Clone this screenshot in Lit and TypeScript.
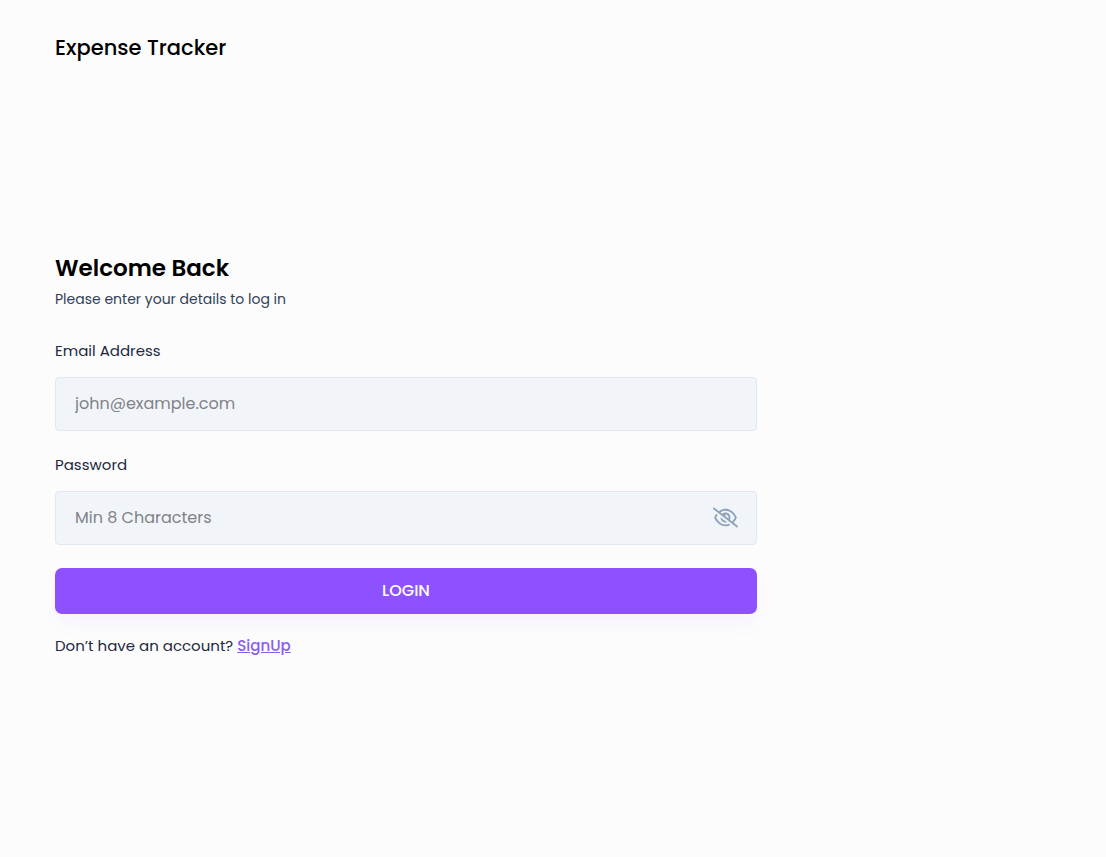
import { LitElement, html, css } from "lit";
import { customElement, state } from "lit/decorators.js";

@customElement("app-root")
export class AppRoot extends LitElement {
  @state() private showPassword = false;

  static styles = css`
    :host {
      display: block;
      font-family: Poppins, Inter, "Liberation Sans", sans-serif;
      font-size: 15px;
      line-height: 22px;
      color: #1d293d;
      background: #fcfcfc;
    }
    * {
      box-sizing: border-box;
    }
    .page {
      display: grid;
      grid-template-columns: 58fr 21fr;
      min-height: 100vh;
    }
    .panel {
      display: flex;
      flex-direction: column;
      padding: 32px 55px 13px;
    }
    .brand {
      margin: 0;
      font-size: 21px;
      font-weight: 500;
      line-height: 32px;
      color: #000;
    }
    .content {
      flex: 1;
      display: flex;
      flex-direction: column;
      justify-content: center;
    }
    .title {
      margin: 0;
      font-size: 23px;
      font-weight: 600;
      line-height: 32px;
      color: #000;
    }
    .subtitle {
      margin: 5px 0 31px;
      font-size: 14px;
      line-height: 20px;
      color: #314158;
    }
    .form {
      display: flex;
      flex-direction: column;
      gap: 23px;
    }
    .field {
      display: flex;
      flex-direction: column;
      gap: 15px;
    }
    .box {
      display: flex;
      align-items: center;
      height: 54px;
      padding: 0 18px 0 19px;
      border: 1px solid #e2e8f0;
      border-radius: 4px;
      background: #f1f5f9;
    }
    .input {
      flex: 1;
      min-width: 0;
      padding: 0;
      border: 0;
      outline: 0;
      background: transparent;
      font: inherit;
      font-size: 16px;
      line-height: 24px;
      color: inherit;
    }
    .input::placeholder {
      color: #808288;
      opacity: 1;
    }
    .toggle {
      display: flex;
      padding: 0;
      border: 0;
      background: none;
      color: #90a1b9;
      cursor: pointer;
    }
    .submit {
      height: 46px;
      border: 0;
      border-radius: 7px;
      background: #8e51ff;
      box-shadow: 0 10px 18px #ad46ff0d;
      color: #fff;
      font: inherit;
      font-size: 16px;
      font-weight: 500;
      cursor: pointer;
    }
    .signup {
      margin: 21px 0 0;
    }
    .link {
      font-weight: 500;
      color: #875cf5;
      text-decoration: underline;
    }
  `;

  render() {
    return html`
      <div class="page">
        <div class="panel">
          <h2 class="brand">Expense Tracker</h2>
          <main class="content">
            <h3 class="title">Welcome Back</h3>
            <p class="subtitle">Please enter your details to log in</p>
            <form class="form" @submit=${(e: Event) => e.preventDefault()}>
              <div class="field">
                <label for="email">Email Address</label>
                <div class="box">
                  <input class="input" id="email" type="text" placeholder="john@example.com" />
                </div>
              </div>
              <div class="field">
                <label for="password">Password</label>
                <div class="box">
                  <input
                    class="input"
                    id="password"
                    type=${this.showPassword ? "text" : "password"}
                    placeholder="Min 8 Characters"
                  />
                  <button
                    class="toggle"
                    type="button"
                    aria-label="Toggle password visibility"
                    @click=${() => (this.showPassword = !this.showPassword)}
                  >
                    <svg width="25" height="25" viewBox="0 0 640 512" fill="currentColor" aria-hidden="true">
                      <path
                        d="M38.8 5.1C28.4-3.1 13.3-1.2 5.1 9.2S-1.2 34.7 9.2 42.9l592 464c10.4 8.2 25.5 6.3 33.7-4.1s6.3-25.5-4.1-33.7L525.6 386.7c39.6-40.6 66.4-86.1 79.9-118.4c3.3-7.9 3.3-16.7 0-24.6c-14.9-35.7-46.2-87.7-93-131.1C465.5 68.8 400.8 32 320 32c-68.2 0-125 26.3-169.3 60.8L38.8 5.1zm151 118.3C226 97.7 269.5 80 320 80c65.2 0 118.8 29.6 159.9 67.7C518.4 183.5 545 226 558.6 256c-12.6 28-36.6 66.8-70.9 100.9l-53.8-42.2c9.1-17.6 14.2-37.5 14.2-58.7c0-70.7-57.3-128-128-128c-32.2 0-61.7 11.9-84.2 31.5l-46.1-36.1zM394.9 284.2l-81.5-63.9c4.2-8.5 6.6-18.2 6.6-28.3c0-5.5-.7-10.9-2-16c.7 0 1.3 0 2 0c44.2 0 80 35.8 80 80c0 9.9-1.8 19.4-5.1 28.2zm9.4 130.3C378.8 425.4 350.7 432 320 432c-65.2 0-118.8-29.6-159.9-67.7C121.6 328.5 95 286 81.4 256c8.3-18.4 21.5-41.5 39.4-64.8L83.1 161.5C60.3 191.2 44 220.8 34.5 243.7c-3.3 7.9-3.3 16.7 0 24.6c14.9 35.7 46.2 87.7 93 131.1C174.5 443.2 239.2 480 320 480c47.8 0 89.9-12.9 126.2-32.5l-41.9-33zM192 256c0 70.7 57.3 128 128 128c13.3 0 26.1-2 38.2-5.8L302 334c-23.5-5.4-43.1-21.2-53.7-42.3l-56.1-44.2c-.2 2.8-.3 5.6-.3 8.5z"
                      />
                    </svg>
                  </button>
                </div>
              </div>
              <button class="submit" type="submit">LOGIN</button>
            </form>
            <p class="signup">Don’t have an account? <a class="link" href="#signup">SignUp</a></p>
          </main>
        </div>
      </div>
    `;
  }
}
